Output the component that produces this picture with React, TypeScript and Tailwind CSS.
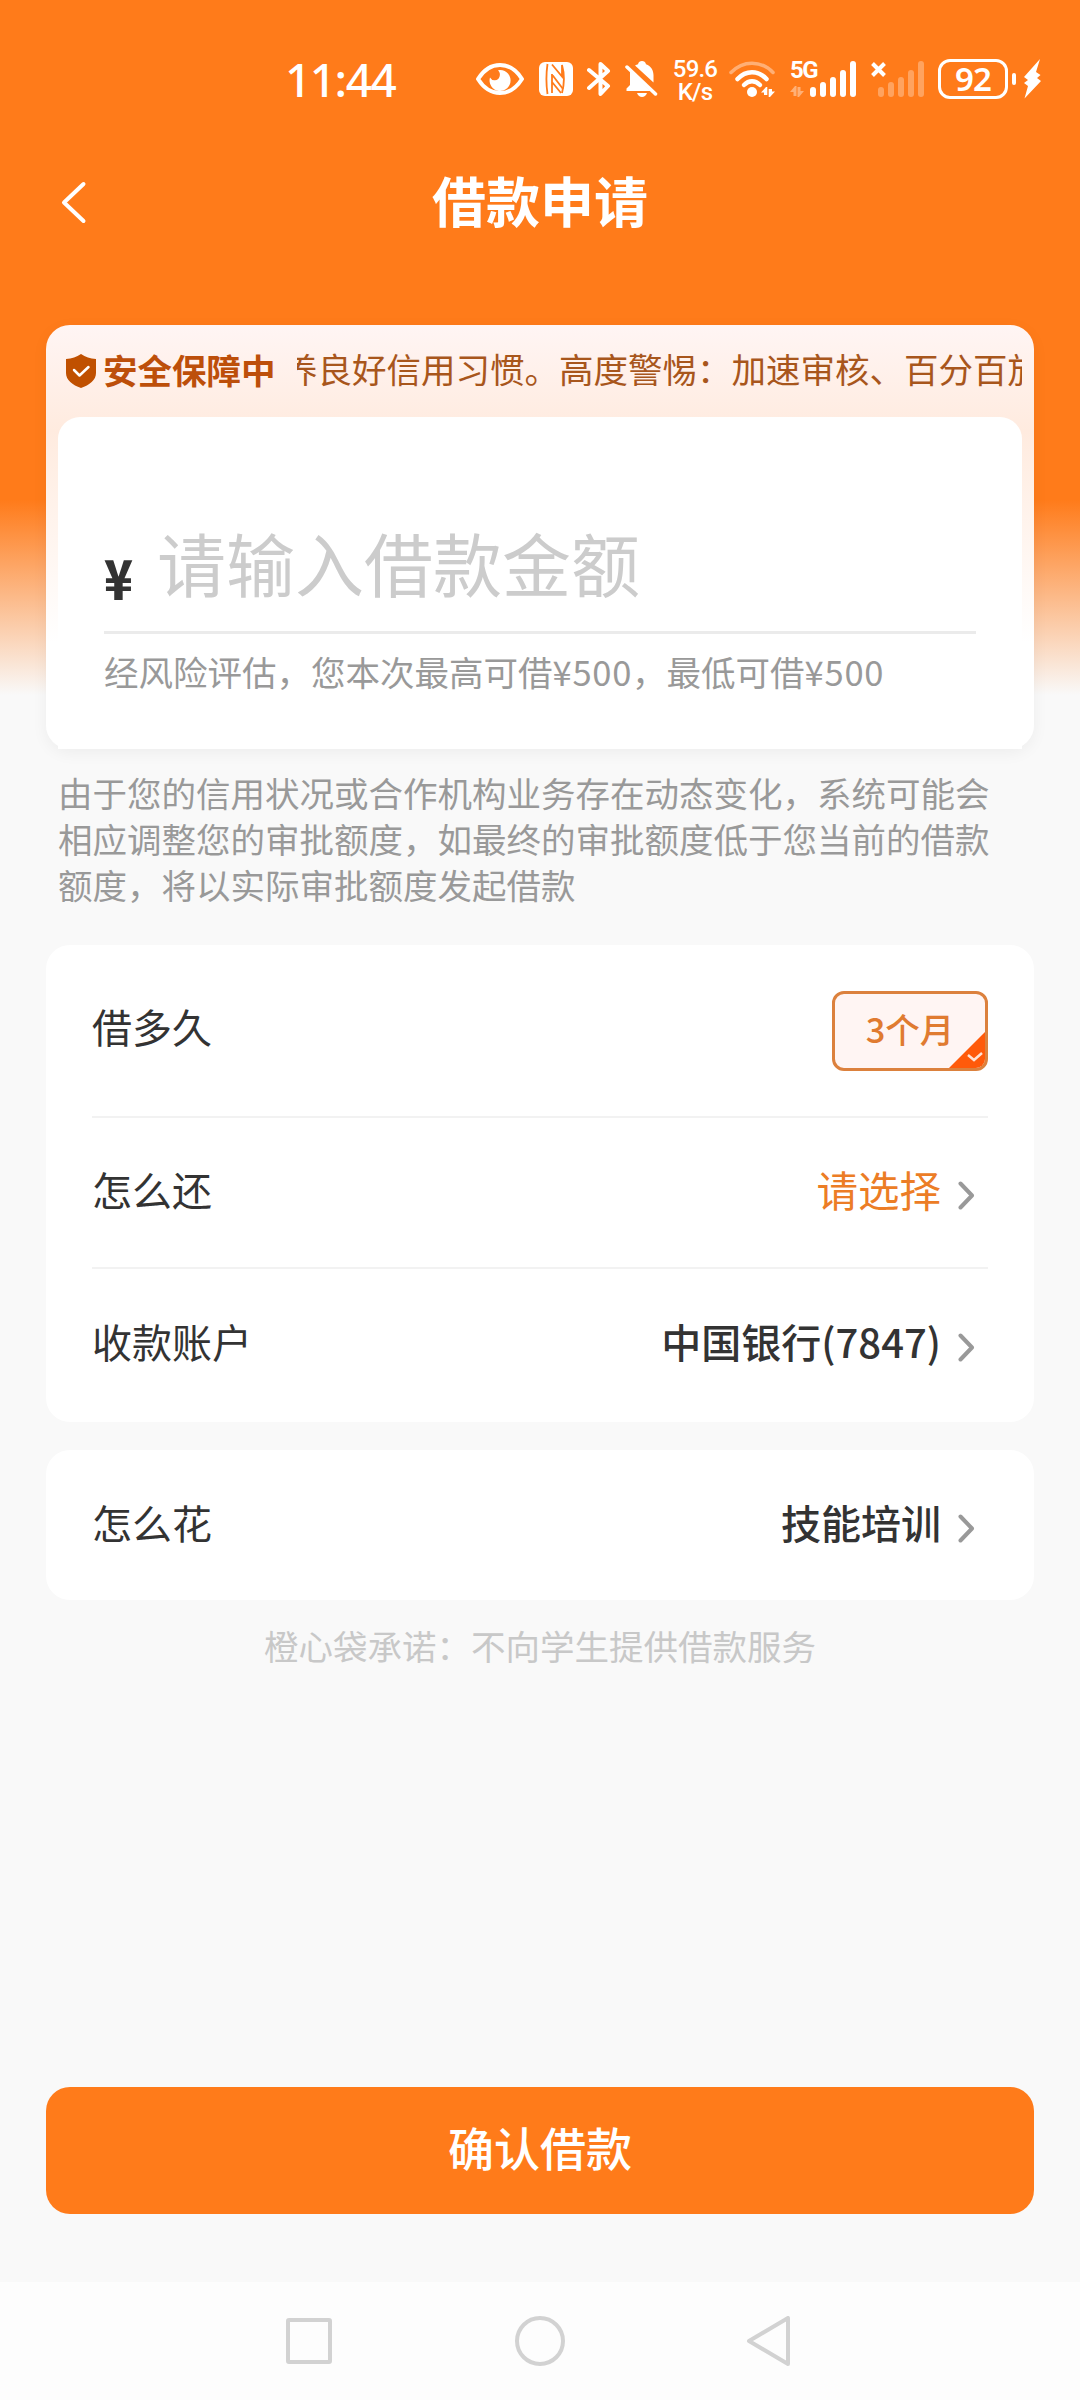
import type { ReactNode } from "react";

function Signal({ className }: { className?: string }) {
  return (
    <svg width="46" height="36" viewBox="0 0 46 36" fill="currentColor" className={className}>
      <rect x="0" y="26" width="6" height="10" rx="3" />
      <rect x="10" y="21" width="6" height="15" rx="3" />
      <rect x="20" y="16" width="6" height="20" rx="3" />
      <rect x="30" y="9" width="6" height="27" rx="3" />
      <rect x="40" y="0" width="6" height="36" rx="3" />
    </svg>
  );
}

function DataArrows({ className }: { className?: string }) {
  return (
    <svg width="14" height="11" viewBox="0 0 14 11" fill="currentColor" className={className}>
      <path d="M0 6 5 0h1.500v10H3.500V6z" />
      <path d="M14 5 9 11H7.500V1h3v4z" />
    </svg>
  );
}

function StatusBar() {
  return (
    <div className="flex h-[158px] items-start text-white">
      <span className="ml-[285px] mt-[48px] w-[191px] font-['Noto_Sans'] text-[46px] font-medium leading-[62px] tracking-[-1.500px]">
        11:44
      </span>
      <svg className="mt-[63px]" width="48" height="32" viewBox="0 0 48 32" fill="none">
        <path d="M2 16C8 6.500 15.500 2 24 2s16 4.500 22 14c-6 9.500-13.500 14-22 14S8 25.500 2 16z" stroke="currentColor" strokeWidth="4" strokeLinejoin="round" />
        <path d="M22 7.200A10.500 10.500 0 1 1 14 14.500a5.200 5.200 0 0 0 9.500-.8c.9-2.600.2-4.900-1.500-6.500z" fill="currentColor" />
      </svg>
      <svg className="ml-[15px] mt-[62px]" width="34" height="34" viewBox="0 0 34 34" fill="none">
        <rect width="34" height="34" rx="6" fill="currentColor" />
        <path d="M8.500 2c-1.300 9-1.300 21 0 30" stroke="#ff7b1a" strokeWidth="1.800" />
        <path d="M13 2.500 23 14.500V3c2.300 8 2.300 19 0 28" stroke="#ff7b1a" strokeWidth="1.800" />
        <path d="M13 12v19M13 12.500 24 27M13 20l9 11" stroke="#ff7b1a" strokeWidth="1.800" />
      </svg>
      <svg className="ml-[14px] mt-[61px]" width="24" height="36" viewBox="0 0 24 36" fill="none" stroke="currentColor" strokeWidth="4" strokeLinecap="round" strokeLinejoin="round">
        <path d="M2 9 21 25l-7.500 8V3L21 10 2 27" />
      </svg>
      <svg className="ml-[14px] mt-[61px]" width="33" height="36" viewBox="0 0 33 36" fill="currentColor">
        <path d="M10 4.500C11.200 3.800 12 3.500 13 3.200 13.500 1 15 0 17 0s3.500 1 4 3.200c5 1.800 7.500 6 7.500 11v7.300z" />
        <path d="M5 10 25.500 30H1.500v-2.500L5 24z" />
        <path d="M12 32h10c-1 2.500-2.800 4-5 4s-4-1.500-5-4z" />
        <path d="M2 6 30.500 33" stroke="currentColor" strokeWidth="3.500" strokeLinecap="round" />
      </svg>
      <div className="ml-[14px] mt-[58px] flex w-[46px] flex-col items-center font-[Roboto] text-[24px] font-medium leading-[23px] tracking-[-0.8px]">
        <span>59.6</span>
        <span>K/s</span>
      </div>
      <svg className="ml-[11px] mt-[61px]" width="47" height="36" viewBox="0 0 47 36" fill="none" stroke="currentColor" strokeLinecap="round">
        <path d="M2 11.500C14-1 32-1 44 11.500" strokeWidth="3.500" opacity=".4" />
        <path d="M8.500 18C17 9 29 9 37.500 18" strokeWidth="4.500" />
        <path d="M15 24c5-5 11-5 16 0" strokeWidth="4.500" />
        <circle cx="23" cy="31" r="5" fill="currentColor" stroke="none" />
        <path d="M32 31.500 37 26h1.300v8H35v-2.500zM46 30.500 41 36h-1.300v-8H43v2.500z" fill="currentColor" stroke="none" />
      </svg>
      <div className="ml-[14px] mt-[61px] flex h-[36px] w-[20px] flex-col justify-between">
        <span className="font-[Roboto] text-[24px] font-bold leading-[18px] tracking-[-1.500px]">5G</span>
        <DataArrows className="opacity-40" />
      </div>
      <Signal className="mt-[61px]" />
      <svg className="ml-[15px] mt-[62px]" width="15" height="15" viewBox="0 0 15 15" stroke="currentColor" strokeWidth="4">
        <path d="M1.500 1.500l12 12M13.500 1.500l-12 12" />
      </svg>
      <Signal className="ml-[-8px] mt-[61px] opacity-30" />
      <div className="ml-[14px] mt-[59px] flex h-[40px] w-[70px] items-center justify-center rounded-[12px] border-[3px] border-white font-['Noto_Sans'] text-[33px] font-semibold leading-[34px] tracking-[-1px]">
        92
      </div>
      <div className="ml-[4px] mt-[73px] h-[12px] w-[4px] rounded-full bg-white" />
      <svg className="ml-[7px] mt-[59px]" width="18" height="40" viewBox="0 0 18 40" fill="currentColor">
        <path d="M17 0 1 18l4 3-4 3 4 3-3.500 12.500L18 22l-4-3 3.500-3-4.500-3z" />
      </svg>
    </div>
  );
}

function Chevron() {
  return (
    <svg width="17" height="29" viewBox="0 0 17 29" fill="none" stroke="#999" strokeWidth="4" strokeLinecap="round" strokeLinejoin="round" className="ml-[17px] mr-[13px] mt-[13px]">
      <path d="M2.500 2.500 14 14.500l-11.500 12" />
    </svg>
  );
}

function Row({ label, className, children }: { label: string; className: string; children: ReactNode }) {
  return (
    <div className={`flex items-center justify-between text-[40px] text-[#333] ${className}`}>
      <span className="leading-[56px]">{label}</span>
      <div className="flex items-center leading-[56px]">{children}</div>
    </div>
  );
}

function AmountCard() {
  return (
    <section className="h-[424px] rounded-[24px] bg-linear-to-b from-[#fff5f4] via-[#ffebdf] via-25% to-white to-75% px-[12px] shadow-[0_4px_16px_rgba(0,0,0,0.05)]">
      <div className="flex h-[92px] items-center pb-[4px]">
        <svg className="ml-[8px] mt-[4px]" width="30" height="34" viewBox="0 0 30 34" fill="none">
          <path d="M15 0c4.500 3 9 4.500 15 5v14c0 7-6.500 12-15 15C6.500 31 0 26 0 19V5c6-.5 10.500-2 15-5z" fill="#c05000" />
          <path d="m8 16 5.500 5.500L22.500 13" stroke="#fff" strokeWidth="2.500" strokeLinecap="round" strokeLinejoin="round" />
        </svg>
        <span className="ml-[7px] w-[194px] text-[34.500px] font-bold leading-[50px] text-[#bd4f0a]">安全保障中</span>
        <div className="min-w-0 flex-1 overflow-hidden whitespace-nowrap pb-[2px] text-[34.500px] leading-[50px] text-[#a8561c]">
          <p className="-ml-[14px]">养良好信用习惯。高度警惕：加速审核、百分百放款</p>
        </div>
      </div>
      <div className="h-[332px] rounded-t-[22px] bg-white px-[46px] pt-[95px]">
        <div className="flex h-[122px] items-start border-b-[3px] border-[#ebebeb]">
          <span className="mt-[35px] w-[53px] font-['Noto_Sans_CJK_SC'] text-[50px] font-black leading-[58px] text-[#333]">
            <span className="inline-block origin-left scale-x-95 scale-y-110">¥</span>
          </span>
          <span className="text-[69px] leading-[100px] text-[#ccc]">请输入借款金额</span>
        </div>
        <p className="mt-[12px] whitespace-nowrap text-[34.500px] leading-[50px] text-[#999]">
          经风险评估，您本次最高可借<span className="tracking-[0.75px]">¥500</span>，最低可借
          <span className="tracking-[0.75px]">¥500</span>
        </p>
      </div>
    </section>
  );
}

function NavBar() {
  return (
    <nav className="flex h-[118px] items-start bg-[#fdfdfd] pl-[286px] pt-[34px]">
      <svg width="505" height="50" viewBox="0 0 505 50" fill="none" stroke="#d2d2d2" strokeWidth="4" strokeLinejoin="round">
        <rect x="2" y="4" width="42" height="42" rx="1" />
        <circle cx="254" cy="25" r="23" />
        <path d="M502 2v46L463 25z" />
      </svg>
    </nav>
  );
}

export default function App() {
  return (
    <div className="flex h-[2400px] w-[1080px] flex-col overflow-hidden bg-[#f9f9f9] bg-[linear-gradient(180deg,#ff7b1a_0,#ff7b1a_500px,#f9f9f9_695px)] font-['Noto_Sans_CJK_SC',sans-serif]">
      <StatusBar />
      <header className="flex h-[167px] items-start px-[61px] pt-[2px]">
        <svg className="mt-[21px]" width="26" height="43" viewBox="0 0 26 43" fill="none" stroke="#fff" strokeWidth="4" strokeLinecap="round" strokeLinejoin="round">
          <path d="M22.500 3 3 21.500l19.500 18.500" />
        </svg>
        <h1 className="flex-1 pr-[26px] text-center text-[54px] font-bold leading-[80px] text-white">借款申请</h1>
      </header>

      <main className="flex flex-1 flex-col px-[46px]">
        <AmountCard />
        <p className="mt-[20px] px-[12px] text-[34.500px] leading-[46px] text-[#999]">
          由于您的信用状况或合作机构业务存在动态变化，系统可能会
          <br />
          相应调整您的审批额度，如最终的审批额度低于您当前的借款
          <br />
          额度，将以实际审批额度发起借款
        </p>

        <section className="mt-[38px] h-[477px] rounded-[24px] bg-white px-[46px]">
          <Row label="借多久" className="h-[173px] border-b-2 border-[#f2f2f2] [&>span]:-mt-[9px]">
            <div className="relative flex h-[80px] w-[156px] items-center justify-center overflow-hidden rounded-[12px] border-[3px] border-[#dc813d] bg-[#fff5f3] pb-[6px] text-[34.500px] font-medium text-[#e07b30]">
              3个月
              <svg className="absolute bottom-0 right-0" width="36" height="36" viewBox="0 0 36 36" fill="none">
                <path d="M36 0v36H0z" fill="#ff5a0a" />
                <path d="m19 23 6 5 8-7" stroke="#ffe3d5" strokeWidth="2.500" />
              </svg>
            </div>
          </Row>
          <Row label="怎么还" className="h-[151px] border-b-2 border-[#f2f2f2] pb-[8px]">
            <span className="text-[41.500px] text-[#ec7d26]">请选择</span>
            <Chevron />
          </Row>
          <Row label="收款账户" className="h-[151px] pb-[7px]">
            <span className="font-medium">中国银行(7847)</span>
            <Chevron />
          </Row>
        </section>

        <section className="mt-[28px] h-[150px] rounded-[24px] bg-white px-[46px]">
          <Row label="怎么花" className="h-[148px] pb-[5px]">
            <span className="font-medium">技能培训</span>
            <Chevron />
          </Row>
        </section>

        <p className="mt-[20px] text-center text-[34.500px] leading-[50px] text-[#c8c8c8]">橙心袋承诺：不向学生提供借款服务</p>

        <button className="mb-[68px] mt-auto h-[127px] rounded-[24px] bg-[#ff7b1a] pb-[9px] text-[46px] font-medium leading-[66px] text-white">
          确认借款
        </button>
      </main>
      <NavBar />
    </div>
  );
}
